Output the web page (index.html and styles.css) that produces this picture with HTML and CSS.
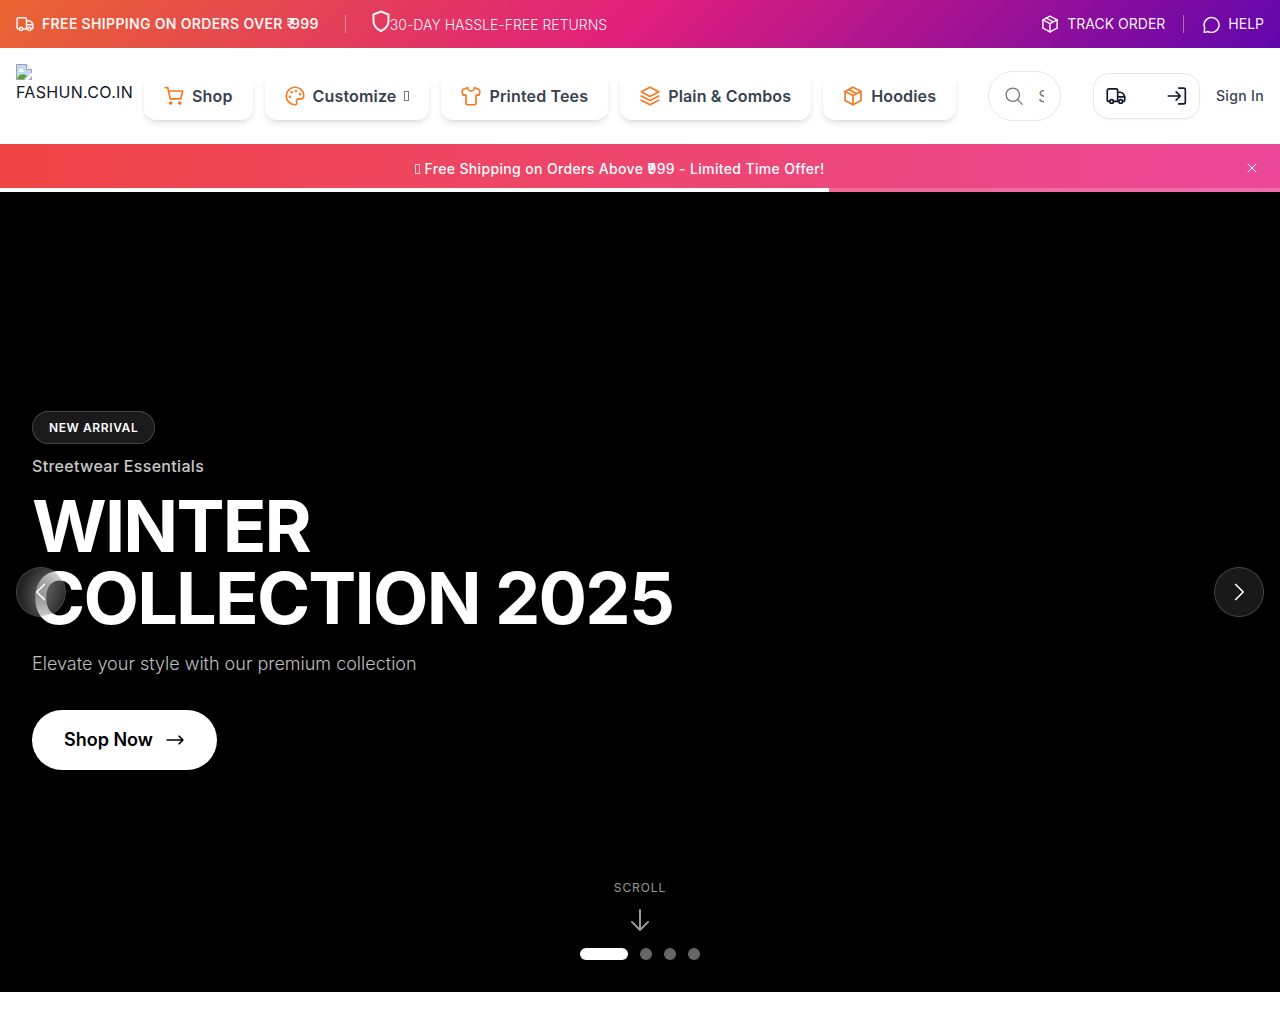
FILE: index.html
```html
<!DOCTYPE html>
<html lang="en">
<head>
<meta charset="utf-8">
<meta name="viewport" content="width=device-width, initial-scale=1">
<title>FASHUN.CO.IN</title>
<link rel="stylesheet" href="styles.css">
</head>
<body>
<svg class="sprite" aria-hidden="true">
  <symbol id="truck" viewBox="0 0 24 24"><path d="M4.500 18.500H3.500a2 2 0 0 1-2-2V5.500a2 2 0 0 1 2-2h8.500a2 2 0 0 1 2 2v13H9"/><path d="M14 7.500h3c2.800 0 5.500 3.500 5.500 6.500v2.500a2 2 0 0 1-2 2M14 13h8.500"/><circle cx="6.800" cy="18.500" r="2.200"/><circle cx="17.700" cy="18.500" r="2.200"/></symbol>
  <symbol id="box" viewBox="0 0 24 24"><path d="M12 1.500 21.500 6.500v11L12 22.500l-9.500-5v-11z"/><path d="M2.500 6.500 12 11.500l9.500-5M12 11.500v11M7 4.200l9.500 5"/></symbol>
</svg>
<div class="topbar">
  <div class="topbar-group">
    <span class="perk perk-strong"><svg class="icon icon-sm"><use href="#truck"/></svg><span>FREE SHIPPING ON ORDERS OVER <span class="rupee">₹</span>999</span></span>
    <span class="divider"></span>
    <span class="returns"><svg class="icon" viewBox="0 0 18 24"><path d="M9 2.500 16.500 5.500v6.500c0 4.500-3 8-7.500 10-4.500-2-7.500-5.500-7.500-10V5.500z"/></svg><span>30-DAY HASSLE-FREE RETURNS</span></span>
  </div>
  <div class="topbar-group topbar-links">
    <a class="perk" href="#track"><svg class="icon icon-sm"><use href="#box"/></svg>TRACK ORDER</a>
    <span class="divider"></span>
    <a class="perk" href="#help"><svg class="icon icon-sm" viewBox="0 0 24 24"><path d="M3 23.500l.5-6.500A10 10 0 1 1 8 22z"/></svg>HELP</a>
  </div>
</div>
<header class="header">
  <a class="logo" href="#home">
    <svg width="16" height="16" viewBox="0 0 16 16"><path d="M.5.5h10l5 5v10H.5z" fill="#c5d8f6" stroke="#a0a0a0"/><path d="M10.500.500v5h5" fill="#fff" stroke="#a0a0a0"/><path d="M3 7a2 2 0 0 1 4-1 1.500 1.500 0 0 1 1 2H3z" fill="#fff"/><path d="M1 15c1-5 7-6 10-3l-3 3z" fill="#55a63a"/><path d="M8.500 16 16 8.500V12l-4 4z" fill="#fff"/></svg>
    <span>FASHUN.CO.IN</span>
  </a>
  <nav class="nav">
    <a class="nav-item" href="#shop"><svg class="icon" viewBox="0 0 24 24"><path d="M1.500 2h3l3 13.500H20L22.500 6H5.500"/><circle class="solid" cx="8" cy="20.500" r="1.200"/><circle class="solid" cx="19" cy="20.500" r="1.200"/></svg>Shop</a>
    <a class="nav-item" href="#customize"><svg class="icon" viewBox="0 0 24 24"><path d="M12 1.500a10.500 10.500 0 1 0 0 21c2 0 2.500-1.500 2-3-.8-2.500.5-4 2.500-4H19c2 0 3.500-1.500 3.500-4C22.500 5.500 18 1.500 12 1.500z"/><circle class="solid" cx="13" cy="6" r=".6"/><circle class="solid" cx="18" cy="10" r=".6"/><circle class="solid" cx="8" cy="7.500" r=".6"/><circle class="solid" cx="6" cy="13" r=".6"/></svg>Customize<span class="glyph-box"></span></a>
    <a class="nav-item" href="#tees"><svg class="icon" viewBox="0 0 24 24"><path d="M8 2 3 4a3 3 0 0 0-1.500 3.500L2.500 11H6v9.500a2 2 0 0 0 2 2h8a2 2 0 0 0 2-2V11h3.500l1-3.500A3 3 0 0 0 21 4l-5-2a4 4 0 0 1-8 0z"/></svg>Printed Tees</a>
    <a class="nav-item" href="#plain"><svg class="icon" viewBox="0 0 24 24"><path d="M12 1.500 22.500 7 12 12.500 1.500 7zM1.500 12 12 17.500 22.500 12M1.500 17 12 22.500 22.500 17"/></svg>Plain &amp; Combos</a>
    <a class="nav-item" href="#hoodies"><svg class="icon"><use href="#box"/></svg>Hoodies</a>
  </nav>
  <label class="search" aria-label="Search">
    <svg class="icon" viewBox="0 0 24 24"><circle cx="10.500" cy="10.500" r="8"/><path d="m16.500 16.500 5.500 5.500"/></svg>
    <input type="text" placeholder="Search products">
  </label>
  <div class="account">
    <div class="account-box">
      <a href="#orders" aria-label="Orders"><svg class="icon"><use href="#truck"/></svg></a>
      <a href="#login" aria-label="Log in"><svg class="icon" viewBox="0 0 24 24"><path d="M1.500 12H16M11 7l5 5-5 5M14 2.500h6a2 2 0 0 1 2 2v15a2 2 0 0 1-2 2h-6"/></svg></a>
    </div>
    <a class="signin" href="#signin">Sign In</a>
  </div>
</header>
<section class="promo">
  <div class="promo-row">
    <p><span class="glyph-box"></span> Free Shipping on Orders Above <span class="rupee">₹</span>999 - Limited Time Offer!</p>
    <button class="promo-close" type="button" aria-label="Close"><svg viewBox="0 0 24 24"><path d="m4 4 16 16M20 4 4 20"/></svg></button>
  </div>
  <div class="progress"><div class="progress-fill" style="width:64.8%"></div></div>
</section>
<main class="hero">
  <div class="hero-copy">
    <span class="badge">NEW ARRIVAL</span>
    <p class="eyebrow">Streetwear Essentials</p>
    <h1>WINTER<br>COLLECTION 2025</h1>
    <p class="lead">Elevate your style with our premium collection</p>
    <a class="cta" href="#shop-now">Shop Now<svg class="icon" viewBox="0 0 24 24"><path d="M2.500 12h19M17 7.500l4.500 4.500-4.500 4.500"/></svg></a>
  </div>
  <button class="arrow arrow-prev" type="button" aria-label="Previous"><svg viewBox="0 0 24 24"><path d="m16 3-9 9 9 9"/></svg></button>
  <button class="arrow arrow-next" type="button" aria-label="Next"><svg viewBox="0 0 24 24"><path d="m8 3 9 9-9 9"/></svg></button>
  <div class="hero-foot">
    <span class="scroll-label">SCROLL</span>
    <svg class="scroll-arrow" viewBox="0 0 24 24"><path d="M12 2v20M4 14l8 8 8-8"/></svg>
    <div class="dots">
      <button class="dot dot-active" type="button" aria-label="Slide 1"></button>
      <button class="dot" type="button" aria-label="Slide 2"></button>
      <button class="dot" type="button" aria-label="Slide 3"></button>
      <button class="dot" type="button" aria-label="Slide 4"></button>
    </div>
  </div>
</main>
</body>
</html>
```
FILE: styles.css
```css
* { box-sizing: border-box; margin: 0; padding: 0; }
body {
  font-family: Inter, sans-serif;
  font-size: 16px;
  line-height: 24px;
  text-rendering: optimizeSpeed;
  color: #111827;
  background: #fff;
}
a { color: inherit; text-decoration: none; }
button { font: inherit; border: 0; cursor: pointer; }
svg { display: block; flex: none; }
.sprite { position: absolute; width: 0; height: 0; }
.icon { width: 20px; height: 20px; }
.icon-sm { width: 18px; height: 18px; }
.icon, symbol, .promo-close svg, .arrow svg, .scroll-arrow {
  fill: none;
  stroke: currentColor;
  stroke-width: 2;
  stroke-linecap: round;
  stroke-linejoin: round;
}
.solid { fill: currentColor; }
.rupee { margin-right: -8px; }
.glyph-box {
  display: inline-block;
  width: 5px;
  height: 10px;
  border: 1px solid currentColor;
  opacity: .7;
}

.topbar {
  display: flex;
  justify-content: space-between;
  align-items: center;
  height: 48px;
  padding: 0 16px;
  font-size: 14px;
  line-height: 20px;
  color: rgba(255, 255, 255, .95);
  background: linear-gradient(135deg, #e96530, #df1f7c 50%, #6006ac);
}
.topbar-group { display: flex; align-items: center; gap: 26px; }
.topbar-links { gap: 18px; }
.perk { display: flex; align-items: center; gap: 8px; }
.perk-strong { font-weight: 600; letter-spacing: .025em; }
.perk-strong .rupee { margin-right: -4px; }
.returns { display: flex; align-items: flex-end; font-weight: 300; }
.returns .icon { width: 18px; height: 24px; margin-bottom: 6px; }
.returns span { margin-bottom: 4px; }
.divider { width: 1px; height: 18px; background: rgba(255, 255, 255, .4); }

.header {
  display: flex;
  align-items: center;
  height: 96px;
  padding: 0 16px;
}
.logo { flex: none; width: 128px; height: 64px; letter-spacing: .02em; }
.nav { display: flex; gap: 12px; flex: none; }
.nav-item {
  display: flex;
  align-items: center;
  gap: 8px;
  height: 48px;
  padding: 0 20px;
  font-weight: 600;
  letter-spacing: .01em;
  color: #374151;
  border-radius: 12px;
  box-shadow: 0 4px 6px -1px rgba(0, 0, 0, .1), 0 2px 4px -2px rgba(0, 0, 0, .1);
}
.nav-item .icon { color: #f47920; }
.search {
  display: flex;
  align-items: center;
  flex: 1;
  min-width: 0;
  height: 50px;
  margin: 0 32px;
  padding: 0 16px 0 15px;
  gap: 14px;
  color: #757575;
  border: 1px solid #e5e7eb;
  border-radius: 25px;
}
.search .icon { stroke-width: 1.5; }
.search input {
  width: 100%;
  min-width: 0;
  font: inherit;
  border: 0;
  outline: 0;
  background: none;
}
.search input::placeholder { color: #757575; }
.account { display: flex; align-items: center; gap: 16px; flex: none; }
.account-box {
  display: flex;
  align-items: center;
  gap: 41px;
  height: 46px;
  padding: 0 12px;
  border: 1px solid #e5e7eb;
  border-radius: 16px;
  box-shadow: 0 1px 2px rgba(0, 0, 0, .05);
}
.signin { font-size: 14px; font-weight: 500; letter-spacing: .025em; color: #374151; }

.promo { color: #fff; background: linear-gradient(90deg, #ef4444, #ec4899); }
.promo-row {
  display: flex;
  align-items: center;
  height: 44px;
  padding: 6px 16px 0;
  font-size: 14px;
  font-weight: 500;
}
.promo-row p { flex: 1; text-align: center; letter-spacing: .025em; }
.promo-close { padding: 6px; margin: 0 0 2px 16px; color: #fff; background: none; }
.promo-close svg { width: 12px; height: 12px; }
.progress { height: 4px; background: rgba(255, 255, 255, .2); }
.progress-fill { height: 4px; background: #fff; }

.hero {
  position: relative;
  display: flex;
  align-items: center;
  min-height: 800px;
  padding: 0 32px 4px;
  color: #fff;
  background: #000;
}
.hero-copy { display: flex; flex-direction: column; align-items: flex-start; }
.badge {
  padding: 8px 16px;
  margin-bottom: 10px;
  font-size: 12px;
  font-weight: 600;
  line-height: 15px;
  letter-spacing: .05em;
  background: rgba(255, 255, 255, .1);
  border: 1px solid rgba(255, 255, 255, .2);
  border-radius: 17px;
}
.eyebrow { margin-bottom: 12px; font-weight: 500; letter-spacing: .02em; color: rgba(255, 255, 255, .8); }
h1 { margin-bottom: 16px; font-size: 72px; font-weight: 700; line-height: 72px; letter-spacing: -.025em; }
.lead { margin-bottom: 32px; font-size: 18px; font-weight: 300; line-height: 28px; color: rgba(255, 255, 255, .75); }
.cta {
  display: flex;
  align-items: center;
  gap: 12px;
  height: 60px;
  padding: 0 32px;
  font-size: 18px;
  font-weight: 600;
  color: #000;
  background: #fff;
  border-radius: 30px;
}
.arrow {
  position: absolute;
  top: 50%;
  display: flex;
  align-items: center;
  justify-content: center;
  width: 50px;
  height: 50px;
  margin-top: -25px;
  color: #fff;
  background: rgba(255, 255, 255, .1);
  border: 1px solid rgba(255, 255, 255, .2);
  border-radius: 50%;
}
.arrow::before {
  content: "";
  position: absolute;
  inset: 0;
  border-radius: 50%;
  backdrop-filter: blur(12px);
  opacity: .75;
}
.arrow svg { position: relative; width: 20px; height: 20px; }
.arrow-prev { left: 16px; }
.arrow-next { right: 16px; }
.hero-foot {
  position: absolute;
  right: 0;
  bottom: 32px;
  left: 0;
  display: flex;
  flex-direction: column;
  align-items: center;
}
.scroll-label { margin-bottom: 12px; font-size: 12px; line-height: 16px; letter-spacing: .075em; color: rgba(255, 255, 255, .6); }
.scroll-arrow { width: 24px; height: 24px; margin-bottom: 16px; color: rgba(255, 255, 255, .6); }
.dots { display: flex; gap: 12px; }
.dot { width: 12px; height: 12px; border-radius: 6px; background: rgba(255, 255, 255, .4); }
.dot-active { width: 48px; background: #fff; }
```
